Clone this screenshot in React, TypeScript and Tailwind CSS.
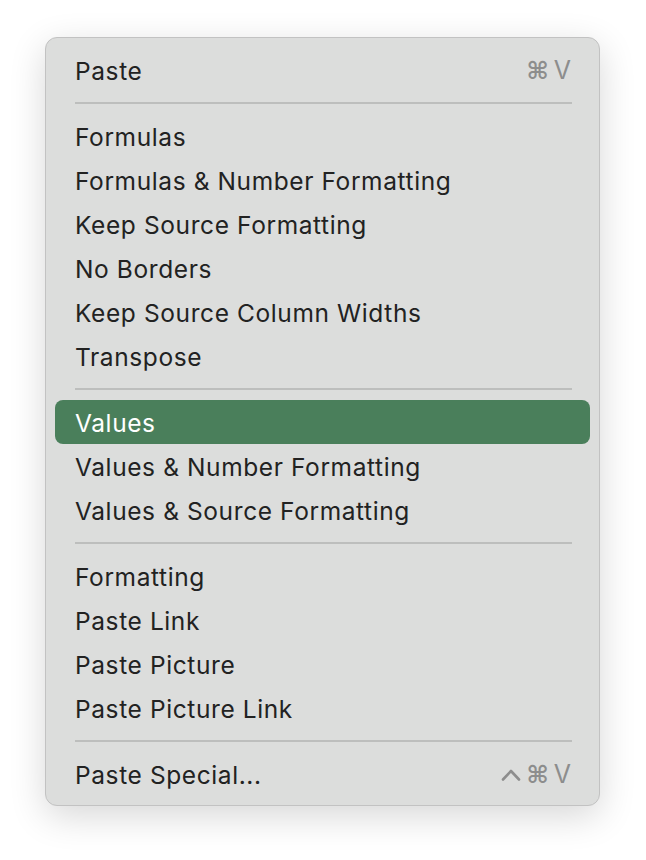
import React from "react";

type Item = { label: string; shortcut?: string; active?: boolean } | "sep";

const items: Item[] = [
  { label: "Paste", shortcut: "⌘V" },
  "sep",
  { label: "Formulas" },
  { label: "Formulas & Number Formatting" },
  { label: "Keep Source Formatting" },
  { label: "No Borders" },
  { label: "Keep Source Column Widths" },
  { label: "Transpose" },
  "sep",
  { label: "Values", active: true },
  { label: "Values & Number Formatting" },
  { label: "Values & Source Formatting" },
  "sep",
  { label: "Formatting" },
  { label: "Paste Link" },
  { label: "Paste Picture" },
  { label: "Paste Picture Link" },
  "sep",
  { label: "Paste Special...", shortcut: "^⌘V" },
];

function Shortcut({ s }: { s: string }) {
  return (
    <span className="flex items-center text-[#8d8d8d] text-[25px] tracking-normal">
      {s.includes("^") && (
        <svg width="20" height="14" viewBox="0 0 20 14" className="mr-[5px]">
          <path d="M2 11.5 L10 3 L18 11.5" fill="none" stroke="#8d8d8d" strokeWidth="2.6" strokeLinecap="round" strokeLinejoin="round" />
        </svg>
      )}
      <span style={{ fontFamily: "'DejaVu Sans', sans-serif" }} className="text-[24px] font-bold mr-[5px]">⌘</span>
      <span>V</span>
    </span>
  );
}

export default function App() {
  return (
    <div className="w-[646px] h-[860px] bg-white" style={{ fontFamily: "Inter, 'Noto Sans', sans-serif" }}>
      <div className="pl-[45px] pt-[37px]">
        <div className="w-[555px] rounded-[12px] border border-[#c2c2c2] bg-[#dcdddc] px-[9px] pt-[10px] pb-[9px] shadow-[0_10px_36px_rgba(0,0,0,0.16)]">
          {items.map((it, i) =>
            it === "sep" ? (
              <div key={i} className="h-[22px] px-[20px] pt-[10px]">
                <div className="h-[2px] bg-[#bdbebd] mr-[-2px]" />
              </div>
            ) : (
              <div
                key={i}
                className={
                  "h-[44px] flex items-center justify-between pl-[20px] pr-[19px] pt-[2px] rounded-[8px] text-[24.5px] tracking-[0.6px] " +
                  (it.active ? "bg-[#4a7f5b] text-white" : "text-[#222222]")
                }
              >
                <span>{it.label}</span>
                {it.shortcut && <Shortcut s={it.shortcut} />}
              </div>
            )
          )}
        </div>
      </div>
    </div>
  );
}
